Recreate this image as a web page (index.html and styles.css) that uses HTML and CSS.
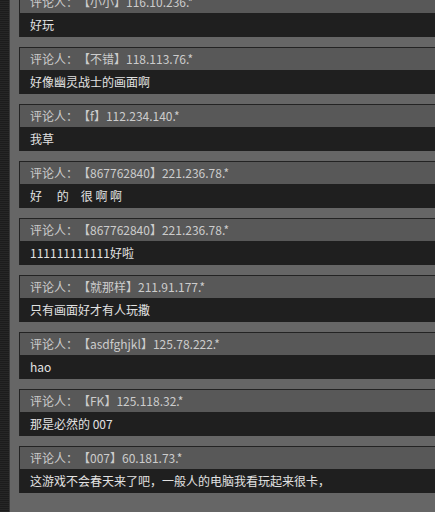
FILE: index.html
```html
<!DOCTYPE html>
<html>
<head>
  <title>评论</title>
  <meta charset="utf-8">
  <link rel="stylesheet" href="styles.css">
</head>
<body>
  <div class="page">
    <div class="rail"></div>
    <div class="comments">
      <div class="comment">
        <div class="head">评论人：【小小】116.10.236.*</div>
        <div class="text">好玩</div>
      </div>
      <div class="comment">
        <div class="head">评论人：【不错】118.113.76.*</div>
        <div class="text">好像幽灵战士的画面啊</div>
      </div>
      <div class="comment">
        <div class="head">评论人：【f】112.234.140.*</div>
        <div class="text">我草</div>
      </div>
      <div class="comment">
        <div class="head">评论人：【867762840】221.236.78.*</div>
        <div class="text">好 　的　很 啊 啊</div>
      </div>
      <div class="comment">
        <div class="head">评论人：【867762840】221.236.78.*</div>
        <div class="text">111111111111好啦</div>
      </div>
      <div class="comment">
        <div class="head">评论人：【就那样】211.91.177.*</div>
        <div class="text">只有画面好才有人玩撒</div>
      </div>
      <div class="comment">
        <div class="head">评论人：【asdfghjkl】125.78.222.*</div>
        <div class="text">hao</div>
      </div>
      <div class="comment">
        <div class="head">评论人：【FK】125.118.32.*</div>
        <div class="text">那是必然的 007</div>
      </div>
      <div class="comment">
        <div class="head">评论人：【007】60.181.73.*</div>
        <div class="text">这游戏不会春天来了吧，一般人的电脑我看玩起来很卡，</div>
      </div>
    </div>
  </div>
</body>
</html>
```

FILE: styles.css
```css
body {
  margin: 0;
  width: 435px;
  height: 512px;
  overflow: hidden;
  background: #666666;
  font-family: "Noto Sans CJK SC", "Liberation Sans", sans-serif;
  font-size: 12px;
  text-spacing-trim: space-all;
}

.page {
  display: flex;
  height: 512px;
}

.rail {
  flex: 0 0 9px;
  background: repeating-linear-gradient(to bottom, #1c1c1c 0, #1c1c1c 1px, #262626 1px, #262626 2px);
  border-right: 1px solid #3a3a3a;
}

.comments {
  flex: 1;
  margin-top: -10px;
  margin-right: -4px;
  padding-left: 9px;
}

.comment {
  border-top: 1px solid #232323;
  border-left: 1px solid #232323;
  margin-bottom: 10px;
}

.head {
  height: 22px;
  line-height: 22px;
  padding-left: 10px;
  background: #585858;
  color: #cccccc;
  white-space: nowrap;
}

.text {
  height: 24px;
  line-height: 24px;
  padding-left: 10px;
  background: #1f1f1f;
  color: #e2e2e2;
  white-space: pre;
}
```
